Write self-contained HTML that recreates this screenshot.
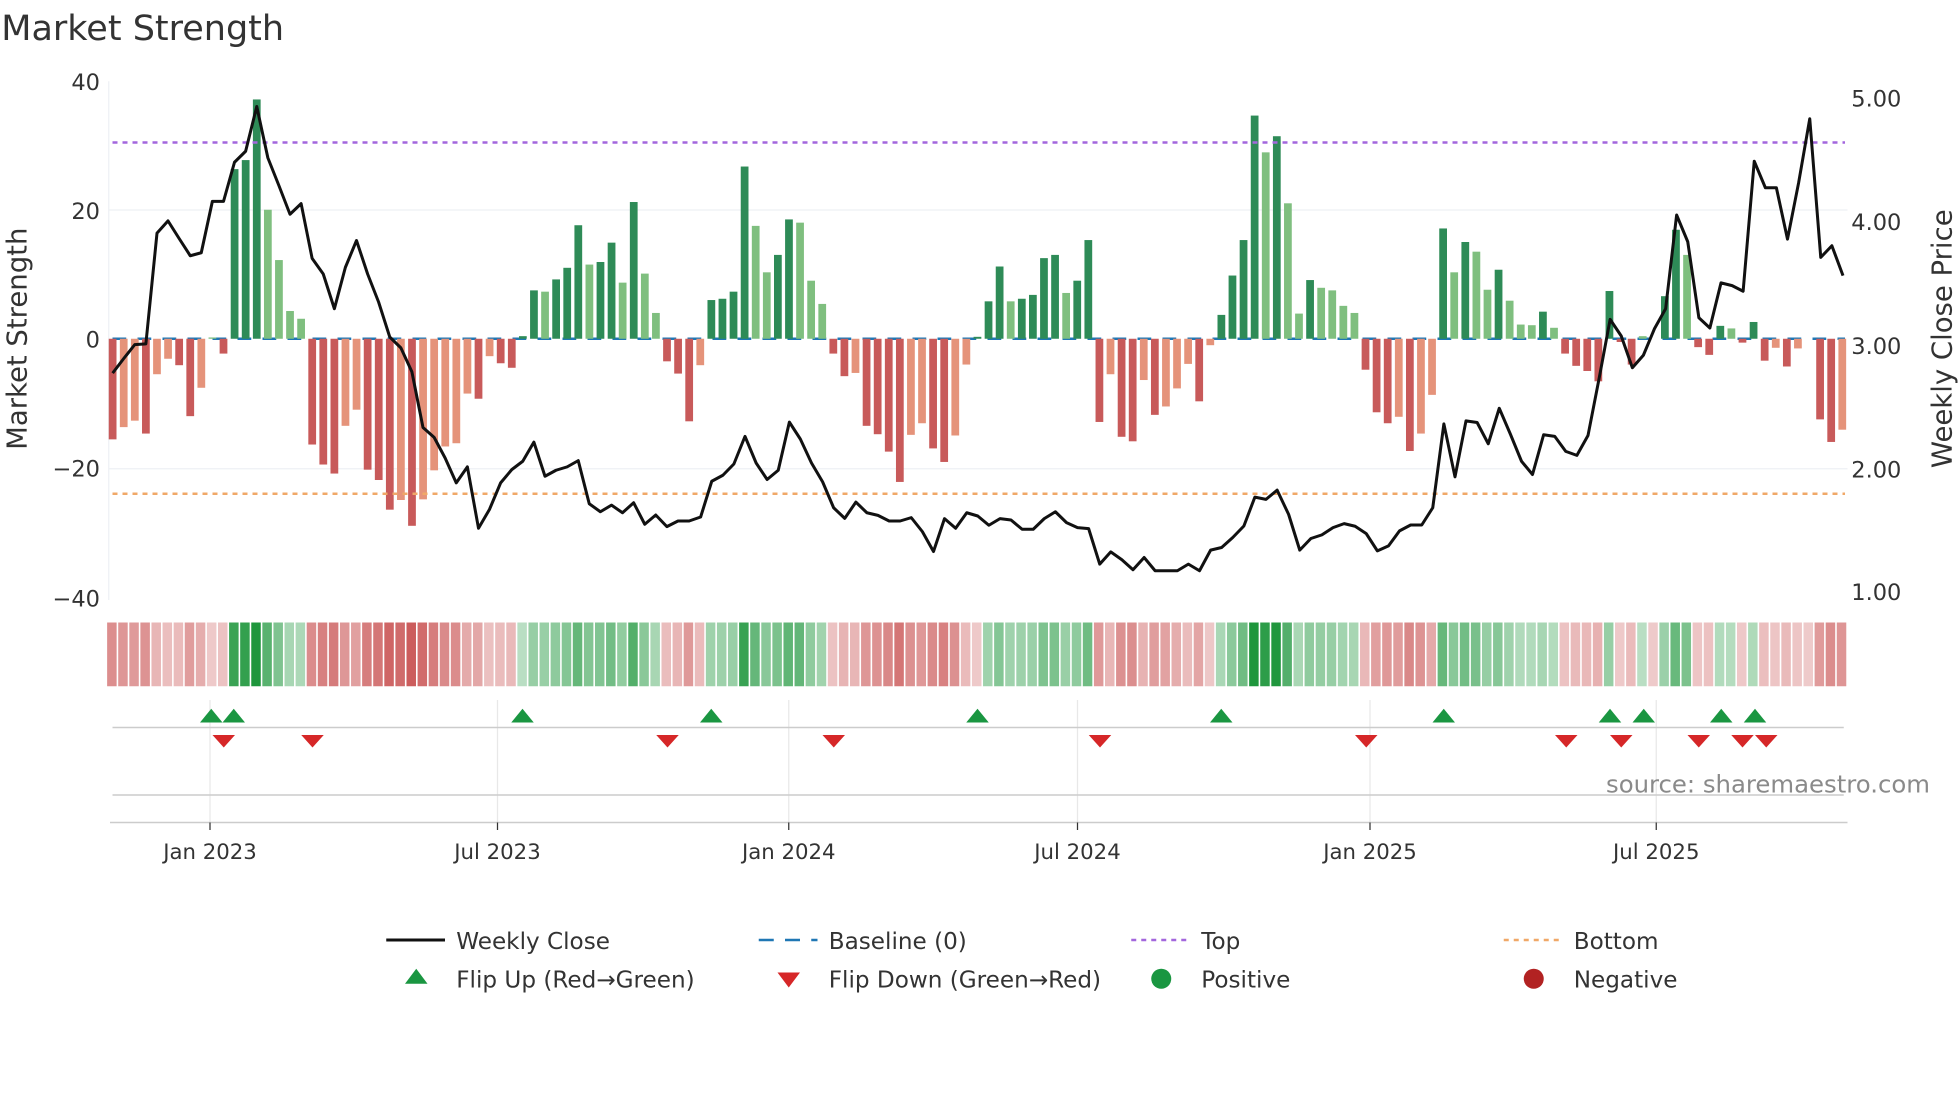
<!DOCTYPE html>
<html><head><meta charset="utf-8"><style>
html,body{margin:0;padding:0;background:#fff;width:1960px;height:1102px;overflow:hidden}
svg{display:block}
text{font-family:"DejaVu Sans","Liberation Sans",sans-serif;fill:#333}
</style></head><body>
<svg id="s" width="1960" height="1102" viewBox="0 0 1568 881.6" xmlns="http://www.w3.org/2000/svg">
<text x="1" y="32" font-size="28" fill="#333">Market Strength</text>
<g stroke="#eef0f4" stroke-width="1">
<line x1="87" y1="168" x2="1478" y2="168"/><line x1="87" y1="375" x2="1478" y2="375"/>
<line x1="87" y1="65" x2="87" y2="480"/>
</g>
<g font-size="18" text-anchor="end">
<text x="80" y="72">40</text><text x="80" y="175">20</text><text x="80" y="278">0</text><text x="80" y="381">−20</text><text x="80" y="485">−40</text>
</g>
<g font-size="18">
<text x="1481" y="85">5.00</text><text x="1481" y="184">4.00</text><text x="1481" y="283">3.00</text><text x="1481" y="382">2.00</text><text x="1481" y="480">1.00</text>
</g>
<text transform="translate(21,271) rotate(-90)" font-size="22" text-anchor="middle">Market Strength</text>
<text transform="translate(1561,271) rotate(-90)" font-size="22" text-anchor="middle">Weekly Close Price</text>
<line x1="90" y1="271" x2="1476" y2="271" stroke="#1f77b4" stroke-width="2" stroke-dasharray="11,9"/>
<g id="bars"></g>
<line x1="90" y1="114" x2="1476" y2="114" stroke="#a366dd" stroke-width="2" stroke-dasharray="4,4"/>
<line x1="90" y1="395" x2="1476" y2="395" stroke="#f0a868" stroke-width="2" stroke-dasharray="4,4"/>
<polyline id="price" fill="none" stroke="#111" stroke-width="2.4" stroke-linejoin="round"/>
<g id="strip"></g>
<g stroke="#e8e8e8" stroke-width="1">
<line x1="168" y1="560" x2="168" y2="658"/><line x1="398" y1="560" x2="398" y2="658"/><line x1="631" y1="560" x2="631" y2="658"/><line x1="862" y1="560" x2="862" y2="658"/><line x1="1096" y1="560" x2="1096" y2="658"/><line x1="1325" y1="560" x2="1325" y2="658"/>
</g>
<line x1="90" y1="582" x2="1475" y2="582" stroke="#ccc" stroke-width="1.2"/>
<line x1="90" y1="636" x2="1475" y2="636" stroke="#ccc" stroke-width="1.2"/>
<line x1="88" y1="658" x2="1478" y2="658" stroke="#ccc" stroke-width="1.2"/>
<g id="mk"></g>
<text x="1544" y="634" font-size="19.5" text-anchor="end" style="fill:#8a8a8a">source: sharemaestro.com</text>
<g stroke="#333" stroke-width="1"><line x1="168" y1="658" x2="168" y2="664"/><line x1="398" y1="658" x2="398" y2="664"/><line x1="631" y1="658" x2="631" y2="664"/><line x1="862" y1="658" x2="862" y2="664"/><line x1="1096" y1="658" x2="1096" y2="664"/><line x1="1325" y1="658" x2="1325" y2="664"/></g>
<g font-size="17" text-anchor="middle">
<text x="168" y="687">Jan 2023</text><text x="398" y="687">Jul 2023</text><text x="631" y="687">Jan 2024</text><text x="862" y="687">Jul 2024</text><text x="1096" y="687">Jan 2025</text><text x="1325" y="687">Jul 2025</text>
</g>
<g font-size="18.5">
<line x1="309" y1="752" x2="356" y2="752" stroke="#111" stroke-width="2.4"/><text x="365" y="759">Weekly Close</text>
<line x1="607" y1="752" x2="654" y2="752" stroke="#1f77b4" stroke-width="2" stroke-dasharray="12,9"/><text x="663" y="759">Baseline (0)</text>
<line x1="905" y1="752" x2="952" y2="752" stroke="#a366dd" stroke-width="2" stroke-dasharray="4,4"/><text x="961" y="759">Top</text>
<line x1="1203" y1="752" x2="1250" y2="752" stroke="#f0a868" stroke-width="2" stroke-dasharray="4,4"/><text x="1259" y="759">Bottom</text>
<polygon points="324,787 342,787 333,775" fill="#1a9641"/><text x="365" y="790">Flip Up (Red→Green)</text>
<polygon points="622,778 640,778 631,790" fill="#d62728"/><text x="663" y="790">Flip Down (Green→Red)</text>
<circle cx="929" cy="783" r="8" fill="#1a9641"/><text x="961" y="790">Positive</text>
<circle cx="1227" cy="783" r="8" fill="#b22222"/><text x="1259" y="790">Negative</text>
</g>
</svg>
<script>
var V=[-15.6,-13.7,-12.7,-14.7,-5.5,-3.1,-4.1,-12,-7.6,0.2,-2.3,26.3,27.7,37.1,20,12.2,4.3,3.1,-16.4,-19.5,-20.9,-13.5,-11,-20.3,-21.9,-26.5,-25,-29,-24.9,-20.4,-16.7,-16.2,-8.5,-9.3,-2.7,-3.8,-4.5,0.4,7.5,7.3,9.2,11,17.6,11.5,11.9,14.9,8.7,21.2,10.1,4,-3.5,-5.4,-12.8,
-4.1,6,6.2,7.3,26.7,17.5,10.3,13,18.5,18,9,5.4,-2.3,-5.8,-5.3,-13.5,-14.8,-17.5,-22.2,-14.9,-13.1,-17,-19.1,-15,-4,0.3,5.8,11.2,5.8,6.2,6.8,12.5,13,7.1,9,15.3,-12.9,-5.5,-15.2,-15.9,-6.4,-11.8,-10.5,-7.7,-3.9,-9.7,-1,3.7,9.8,15.3,34.6,28.9,31.4,
21,3.9,9.1,7.9,7.5,5.1,4,-4.8,-11.4,-13.1,-12.1,-17.4,-14.7,-8.7,17.1,10.3,15,13.5,7.6,10.7,5.9,2.2,2.1,4.2,1.7,-2.3,-4.2,-5,-6.6,7.4,-0.5,-4,0.4,0,6.6,16.9,13,-1.3,-2.5,2,1.6,-0.6,2.6,-3.4,-1.4,-4.3,-1.5,0,-12.5,-16,-14.1];
var L="DLLDLLDDLLDDDDLLLLDDDLLDDDLDLLLLLDLDDDDLDDDLDDLDLLDDD"+"LDDDDLLDDLLLDDLDDDDLLDDLLDDDLDDDDLDDDLDDLDLLLDLDDDDLD"+"LLDLLLLDDDLDLLDLDLLDLLLDLDDDDDDDLLDDLDDDLDDDLDLLDDL";
var ns="http://www.w3.org/2000/svg",bars=document.getElementById('bars'),strip=document.getElementById('strip');
function el(t,a){var e=document.createElementNS(ns,t);for(var k in a)e.setAttribute(k,a[k]);return e;}
for(var i=0;i<V.length;i++){var v=V[i],x=90+8.87*i-3,h=Math.abs(v)*5.16,pos=v>=0,light=L[i]=='L';
var c=pos?(light?'#7fbf7f':'#2e8b57'):(light?'#e5937a':'#c85a5a');
if(h>0.5)bars.appendChild(el('rect',{x:x,y:pos?271-h:271,width:6.2,height:h,fill:c}));
var a=0.3+0.7*Math.min(Math.abs(v)/32,1);
strip.appendChild(el('rect',{x:x-1.3,y:498,width:7.6,height:51,fill:pos&&v>0.3?'rgba(30,150,60,'+a+')':'rgba(200,80,80,'+a+')'}));}
var Z=[[80,[33,884,62,840,91,798,120,796,149,462,178,425,207,478,236,530,265,521,294,366,323,366,352,248,381,215,410,80,439,235,468,318,497,405,526,373,555,538,584,585,613,690,642,565,671,484,700,585,729,670,758,775,787,808,816,880,845,1048,874,1078,903,1140,932,1215,961,1167,990,1352,1019,1295,1048,1215,1077,1175,1106,1150,1135,1092,1164,1195,1193,1177,1222,1167,1251,1148,1280,1278,1309,1302,1338,1282,1367,1305,1396,1275,1425,1340,1454,1312,1483,1347,1512,1330,1541,1330]],
[544,[54,1318,83,1210,112,1192,141,1158,170,1075,199,1155,228,1205,257,1177,286,1032,315,1083,344,1155,373,1212,402,1290,431,1322,460,1273,489,1305,518,1313,547,1330,576,1330,605,1320,634,1362,663,1422,692,1323,721,1352,750,1305,779,1315,808,1343,837,1323,866,1327,895,1355,924,1355,953,1323,982,1302,1011,1335,1040,1350,1069,1353,1098,1460,1127,1423,1156,1447,1185,1477,1214,1440,1243,1480,1272,1480,1301,1480,1330,1460,1359,1480,1388,1418,1417,1410,1446,1380,1475,1345,1504,1258,1533,1265,1562,1237]],
[1008,[75,1310,104,1418,133,1383,162,1372,191,1350,220,1338,249,1346,278,1368,307,1420,336,1405,365,1360,394,1342,423,1342,452,1290,481,1037,510,1197,539,1028,568,1033,597,1097,626,990,655,1068,684,1150,713,1190,742,1070,771,1075,800,1120,829,1132,858,1072,887,900,916,722,945,772,974,868,1003,830,1032,750,1061,690,1090,407,1119,488,1148,717,1177,748,1206,612,1235,620,1264,637,1293,245,1322,325,1351,325,1380,480,1409,310,1438,117,1467,535,1496,500,1525,590]]];
var pts=[];Z.forEach(function(z){for(var j=0;j<z[1].length;j+=2)pts.push((z[0]+z[1][j]/3.27).toFixed(1)+','+(64+z[1][j+1]/3.77).toFixed(1));});
document.getElementById('price').setAttribute('points',pts.join(' '));
var mk=document.getElementById('mk');
[169,187,418,569,782,977,1155,1288,1315,1377,1404].forEach(function(x){mk.appendChild(el('polygon',{points:(x-9)+',578 '+(x+9)+',578 '+x+',567',fill:'#1a9641'}));});
[179,250,534,667,880,1093,1253,1297,1359,1394,1413].forEach(function(x){mk.appendChild(el('polygon',{points:(x-9)+',588 '+(x+9)+',588 '+x+',598',fill:'#d62728'}));});
</script>
</body></html>
